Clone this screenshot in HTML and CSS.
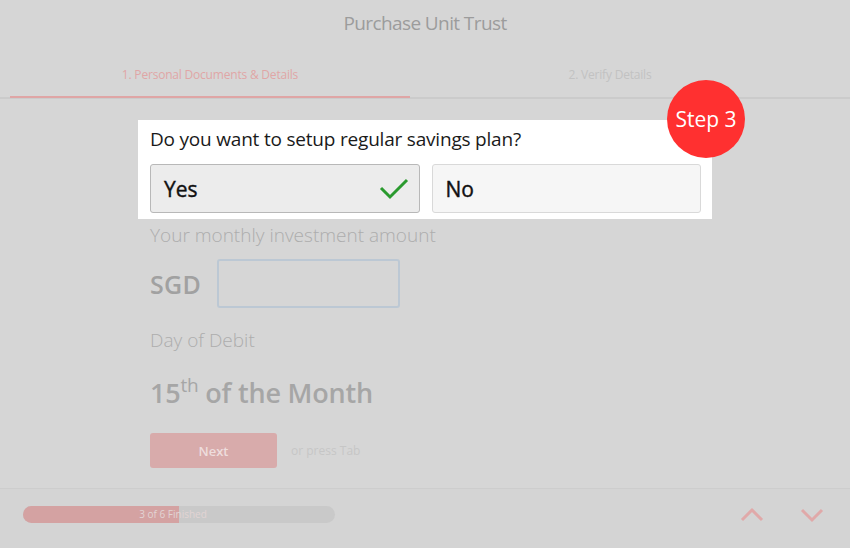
FILE: index.html
```html
<!DOCTYPE html>
<html>
<head>
<meta charset="utf-8">
<link rel="stylesheet" href="styles.css">
</head>
<body>
<div class="page">
  <header class="header">Purchase Unit Trust</header>
  <nav class="tabs">
    <div class="tab active">1. Personal Documents &amp; Details</div>
    <div class="tab">2. Verify Details</div>
  </nav>
  <main class="main">
    <section class="highlight">
      <div class="badge">Step 3</div>
      <div class="question">Do you want to setup regular savings plan?</div>
      <div class="choices">
        <button class="choice selected">Yes
          <svg class="check" width="30" height="22" viewBox="0 0 30 22"><polyline points="2,10 11,19 28,2" fill="none" stroke="#2a9a2e" stroke-width="3"/></svg>
        </button>
        <button class="choice">No</button>
      </div>
    </section>
    <div class="label first">Your monthly investment amount</div>
    <div class="amount-row">
      <span class="currency">SGD</span>
      <span class="amount-input"></span>
    </div>
    <div class="label second">Day of Debit</div>
    <div class="debit-day">15<sup>th</sup> of the Month</div>
    <div class="actions">
      <button class="next">Next</button>
      <span class="hint">or press Tab</span>
    </div>
  </main>
  <footer class="footer">
    <div class="progress">
      <div class="progress-fill" style="width:50%"></div>
      <span class="progress-text">3 of 6 Finished</span>
    </div>
    <div class="nav-arrows">
      <svg width="24" height="16" viewBox="0 0 24 16"><polyline points="2,13 12,3 22,13" fill="none" stroke="#e0a9a9" stroke-width="3"/></svg>
      <svg width="24" height="16" viewBox="0 0 24 16"><polyline points="2,3 12,13 22,3" fill="none" stroke="#e0a9a9" stroke-width="3"/></svg>
    </div>
  </footer>
</div>
</body>
</html>
```
FILE: styles.css
```css
* { box-sizing: border-box; }
html, body { margin: 0; padding: 0; }
body {
  background: #d6d6d6;
  font-family: "Open Sans", "Noto Sans", sans-serif;
  width: 850px;
  height: 548px;
  overflow: hidden;
}
.page { display: flex; flex-direction: column; height: 548px; }
.header {
  height: 48px;
  padding-top: 9px;
  text-align: center;
  font-size: 19px;
  letter-spacing: -0.6px;
  color: #9c9c9c;
  line-height: 28px;
}
.tabs {
  display: flex;
  padding-left: 10px;
  height: 51px;
  border-bottom: 2px solid #cbcbcb;
}
.tab {
  width: 400px;
  text-align: center;
  font-size: 12px;
  color: #c2c2c2;
  padding-top: 18px;
  letter-spacing: -0.2px;
}
.tab.active {
  color: #e0a6a6;
  border-bottom: 2px solid #dfa5a5;
  margin-bottom: -1px;
}
.main {
  flex: 1;
  padding: 21px 0 0 150px;
}
.highlight {
  position: relative;
  width: 574px;
  margin-left: -12px;
  padding: 6px 11px 6px 12px;
  background: #ffffff;
}
.badge {
  position: absolute;
  left: 529px;
  top: -40px;
  width: 78px;
  height: 78px;
  border-radius: 50%;
  background: #ff3030;
  color: #fff;
  font-size: 21px;
  display: flex;
  align-items: center;
  justify-content: center;
  letter-spacing: 0;
}
.question {
  font-size: 19px;
  font-weight: 400;
  line-height: 27px;
  color: #1a1a1a;
  letter-spacing: -0.2px;
}
.choices {
  display: flex;
  gap: 12px;
  margin-top: 11px;
}
.choice {
  flex: 1;
  height: 49px;
  display: flex;
  align-items: center;
  justify-content: space-between;
  padding: 0 12px 0 13px;
  font-family: inherit;
  font-size: 21px;
  font-weight: 500;
  -webkit-text-stroke: 0.4px #111;
  color: #111;
  background: #f6f6f6;
  border: 1px solid #d9d9d9;
  border-radius: 3px;
  text-align: left;
}
.choice.selected {
  background: #ececec;
  border-color: #b8b8b8;
}
.check { margin-right: -2px; }
.label {
  font-size: 19px;
  font-weight: 300;
  color: #adadad;
  line-height: 26px;
  letter-spacing: 0;
}
.label.first { margin-top: 3px; }
.amount-row {
  display: flex;
  align-items: center;
  gap: 16px;
  margin-top: 11px;
}
.currency {
  font-size: 25px;
  font-weight: 600;
  color: #a1a1a1;
  letter-spacing: 0.3px;
}
.amount-input {
  width: 183px;
  height: 49px;
  border: 2px solid #bcc8d4;
  border-radius: 3px;
}
.label.second { margin-top: 19px; }
.debit-day {
  margin-top: 24px;
  font-size: 27px;
  font-weight: 600;
  color: #a6a6a6;
  line-height: 32px;
  letter-spacing: -0.2px;
}
.debit-day sup {
  font-size: 19px;
  font-weight: 400;
  vertical-align: 11px;
  line-height: 0;
}
.actions {
  display: flex;
  align-items: center;
  gap: 14px;
  margin-top: 24px;
}
.next {
  width: 127px;
  height: 35px;
  border: none;
  border-radius: 3px;
  background: #d8abab;
  color: #eedddd;
  font-family: inherit;
  font-size: 13px;
  font-weight: 600;
}
.hint {
  font-size: 12px;
  color: #c6c6c6;
}
.footer {
  height: 60px;
  border-top: 1px solid #cdcdcd;
  background: #d4d4d4;
  display: flex;
  align-items: flex-start;
  justify-content: space-between;
  padding: 17px 26px 0 23px;
}
.progress {
  position: relative;
  width: 312px;
  height: 17px;
  border-radius: 9px;
  background: #c9c9c9;
  overflow: hidden;
}
.progress-fill {
  height: 100%;
  background: #d4a2a2;
}
.progress-text {
  position: absolute;
  left: 0;
  right: 0;
  top: 0;
  text-align: center;
  font-size: 10px;
  line-height: 17px;
  color: #e2d4d4;
  padding-right: 12px;
}
.nav-arrows {
  display: flex;
  gap: 36px;
  margin-top: 1px;
}
```
